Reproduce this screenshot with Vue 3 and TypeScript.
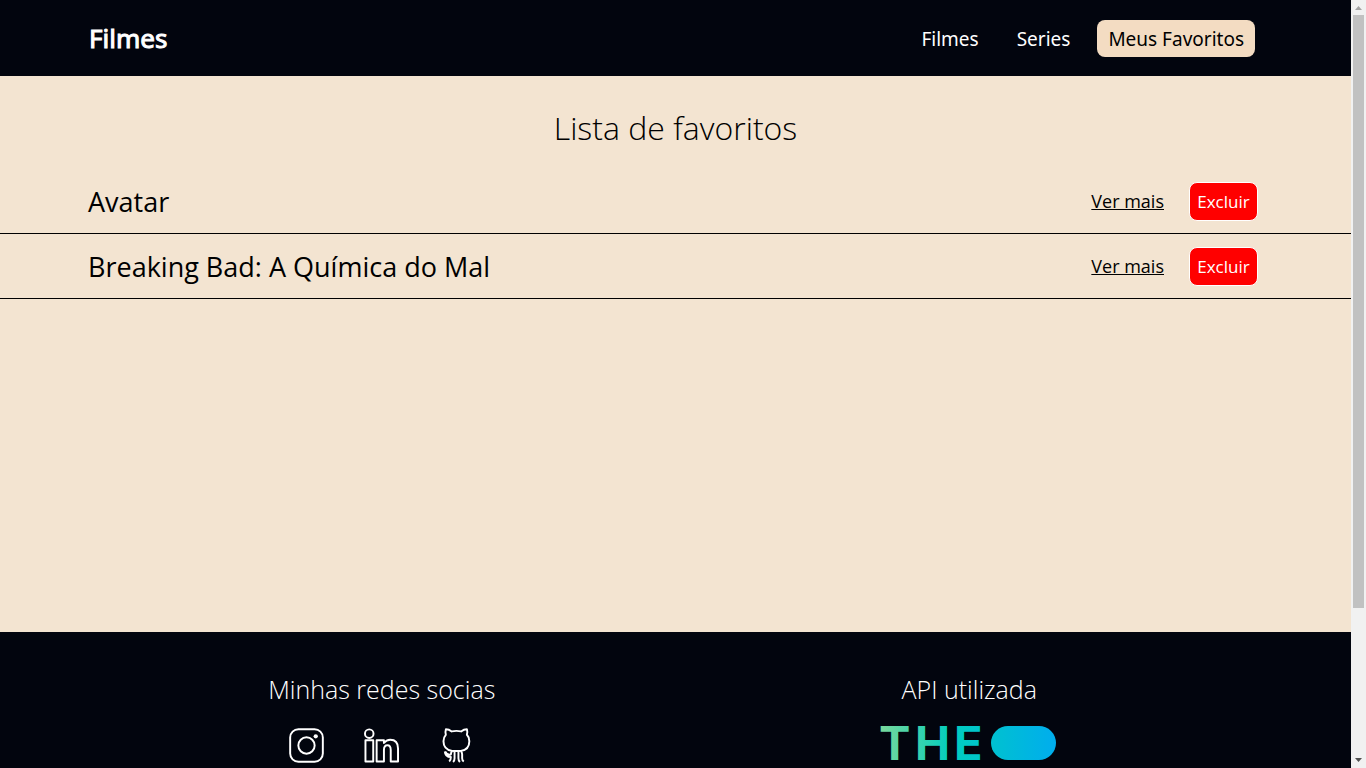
<script setup lang="ts">
import { ref } from 'vue'

interface Favorite {
  id: number
  title: string
}

const favorites = ref<Favorite[]>([
  { id: 1, title: 'Avatar' },
  { id: 2, title: 'Breaking Bad: A Química do Mal' },
])

function remove(id: number): void {
  favorites.value = favorites.value.filter((item) => item.id !== id)
}
</script>

<template>
  <div class="shell">
    <div class="page">
      <header class="header">
        <a class="brand" href="#">Filmes</a>
        <nav class="nav">
          <a class="nav-link" href="#filmes">Filmes</a>
          <a class="nav-link" href="#series">Series</a>
          <a class="nav-link active" href="#favoritos">Meus Favoritos</a>
        </nav>
      </header>

      <main class="main">
        <h1 class="title">Lista de favoritos</h1>
        <ul class="list">
          <li v-for="item in favorites" :key="item.id" class="row">
            <span class="name">{{ item.title }}</span>
            <a class="more" :href="`#titulo-${item.id}`">Ver mais</a>
            <button class="remove" type="button" @click="remove(item.id)">Excluir</button>
          </li>
        </ul>
      </main>

      <footer class="footer">
        <section class="column">
          <h2 class="subtitle">Minhas redes socias</h2>
          <div class="socials">
            <a href="#instagram" aria-label="Instagram">
              <svg class="icon" viewBox="0 0 36 36">
                <rect x="1.2" y="1.2" width="33.6" height="33.6" rx="8.500" />
                <circle cx="18" cy="18" r="8.4" />
                <circle class="dot" cx="27.500" cy="8.500" r="2.2" />
              </svg>
            </a>
            <a href="#linkedin" aria-label="LinkedIn">
              <svg class="icon" viewBox="0 0 36 36">
                <circle cx="5.4" cy="5.8" r="4.4" />
                <path d="M1.500 12.500h8v22h-8z" />
                <path d="M13 12.500h7.500v3c1.500-2.200 3.600-3.500 6.500-3.500 5 0 8 3.300 8 9v13.500h-7.500V22.500c0-3.200-1.200-4.800-3.400-4.800-2.400 0-3.600 1.700-3.600 4.800v12H13z" />
              </svg>
            </a>
            <a href="#github" aria-label="GitHub">
              <svg class="icon" viewBox="0 0 36 36">
                <path d="M13.500 23.500C8 22.600 4.600 19 4.600 13.500c0-2.700.8-4.800 2.400-6.500C6.400 5 6.500 3.200 7.100 1.200c2.200 0 4.200.9 6 2.300 3.200-.7 6.400-.7 9.600 0 1.800-1.400 3.800-2.300 6-2.300.6 2 .7 3.800 0 5.800C30.400 8.700 31.200 10.800 31.200 13.500c0 5.500-3.200 9.100-8.700 10-1.300.3-7.700.3-9 0z" />
                <path d="M13.500 23.500c-1 1.200-1.300 2.200-1.300 3.800-3 .7-4.400-.3-5.900-3.300M6 24c.2 3.800 2.500 5.800 6.200 5.800 0 2.200-.5 3.700-1.700 4.700M16 24.500V31c0 1.800-.5 3-1.500 4M20 24.500V31c0 1.800.5 3 1.500 4M22.500 23.500c1 1.200 1.300 2.200 1.300 3.800V31c0 1.600.5 2.700 1.700 3.500" />
              </svg>
            </a>
          </div>
        </section>
        <section class="column">
          <h2 class="subtitle">API utilizada</h2>
          <a href="#api" aria-label="The Movie DB">
            <svg class="api-logo" viewBox="0 0 177 124">
              <defs>
                <linearGradient id="brand-gradient" gradientUnits="userSpaceOnUse" x1="0" y1="0" x2="176" y2="0">
                  <stop offset="0" stop-color="#78d99b" />
                  <stop offset=".4" stop-color="#00cdbe" />
                  <stop offset="1" stop-color="#00adee" />
                </linearGradient>
              </defs>
              <g fill="url(#brand-gradient)">
                <text class="api-word" y="34"><tspan x="-2">T</tspan><tspan x="34">H</tspan><tspan x="73">E</tspan></text>
                <rect x="110" y="0" width="65" height="34" rx="17" />
              </g>
            </svg>
          </a>
        </section>
      </footer>
    </div>

    <div class="scrollbar" aria-hidden="true">
      <svg class="arrow up" viewBox="0 0 15 15"><path d="M4 10h7L7.500 6z" /></svg>
      <div class="thumb"></div>
      <svg class="arrow down" viewBox="0 0 15 15"><path d="M4 5h7L7.500 9z" /></svg>
    </div>
  </div>
</template>

<style>
body {
  margin: 0;
}
</style>

<style scoped>
.shell {
  display: flex;
  height: 100vh;
  overflow: hidden;
  font-family: 'Open Sans', sans-serif;
  color: #000;
}

.page {
  flex: 1;
  min-width: 0;
  overflow: hidden;
  display: flex;
  flex-direction: column;
  background: #f3e4d1;
}

.header {
  flex: none;
  display: flex;
  align-items: center;
  justify-content: space-between;
  box-sizing: border-box;
  height: 76px;
  padding: 0 96px 0 89px;
  background: #02050e;
  font-family: 'Noto Sans', sans-serif;
}

.brand {
  color: #fff;
  font-size: 26px;
  line-height: 34px;
  -webkit-text-stroke: 1px #fff;
  text-decoration: none;
}

.nav {
  display: flex;
  gap: 16px;
}

.nav-link {
  padding: 6px 11px 4px;
  border-radius: 8px;
  color: #fff;
  font-size: 19px;
  line-height: 27px;
  text-decoration: none;
}

.nav-link.active {
  background: #f3dcc2;
  color: #000;
}

.main {
  flex: none;
  min-height: 556px;
}

.title {
  margin: 0;
  padding: 30px 0 19px;
  font-size: 32px;
  font-weight: 300;
  line-height: 44px;
  text-align: center;
}

.list {
  margin: 0;
  padding: 0;
  list-style: none;
}

.row {
  display: flex;
  align-items: center;
  height: 64px;
  padding: 0 93px 0 88px;
  border-bottom: 1px solid #000;
}

.name {
  flex: 1;
  font-size: 27px;
}

.more {
  margin-right: 25px;
  color: #000;
  font-size: 18px;
}

.remove {
  min-width: 69px;
  height: 39px;
  padding: 0 7px;
  border: 1px solid #fff;
  border-radius: 8px;
  background: #f00;
  color: #fff;
  font-family: inherit;
  font-size: 17px;
}

.footer {
  flex: none;
  display: grid;
  grid-template-columns: 1fr 1fr;
  padding: 40px 88px;
  background: #02050e;
  color: #fff;
}

.column {
  display: flex;
  flex-direction: column;
  align-items: center;
}

.subtitle {
  margin: 0 0 20px;
  font-size: 25px;
  font-weight: 300;
  line-height: 34px;
}

.socials {
  display: flex;
  gap: 40px;
  padding-top: 2px;
}

.icon {
  display: block;
  width: 35px;
  height: 35px;
  fill: none;
  stroke: #fff;
  stroke-width: 2;
  stroke-linejoin: round;
}

.dot {
  fill: #fff;
  stroke: none;
}

.api-logo {
  display: block;
  width: 177px;
  height: 124px;
  overflow: visible;
}

.api-word {
  font-family: Inter, sans-serif;
  font-size: 47px;
  font-weight: 700;
}

.scrollbar {
  flex: none;
  display: flex;
  flex-direction: column;
  width: 15px;
  background: #f1f1f1;
}

.arrow {
  display: block;
  width: 15px;
  height: 15px;
}

.up {
  fill: #a3a3a3;
}

.down {
  margin-top: auto;
  fill: #505050;
}

.thumb {
  height: calc((100vh - 30px) * 0.803);
  margin: 0 2px;
  background: #c1c1c1;
}
</style>
